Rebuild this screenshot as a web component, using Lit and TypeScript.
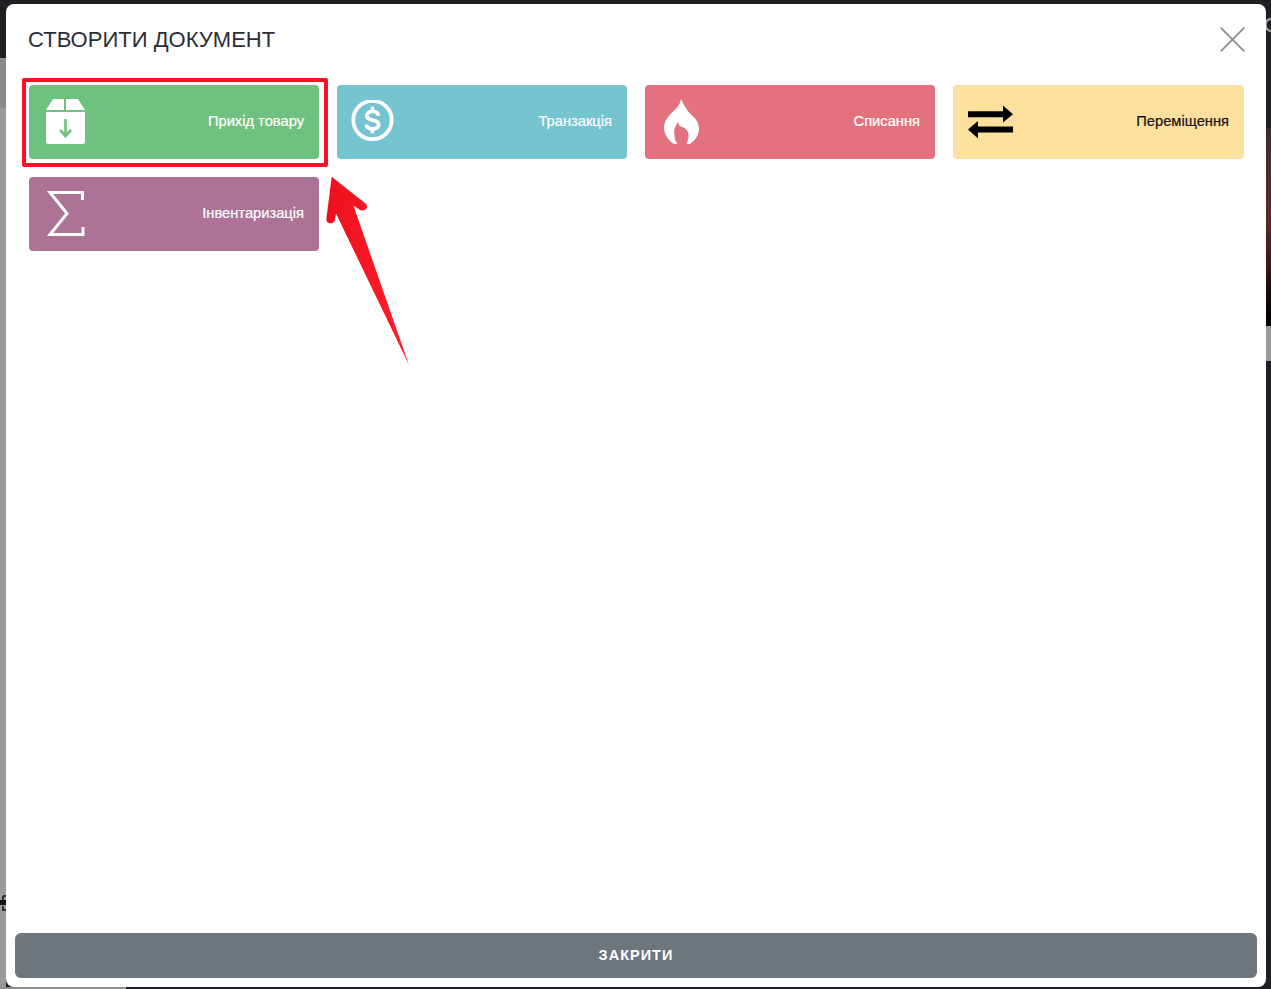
import { LitElement, html, css } from "lit";
import { customElement } from "lit/decorators.js";

@customElement("app-root")
export class AppRoot extends LitElement {
  static styles = css`
    :host {
      display: block;
      position: relative;
      width: 1271px;
      height: 989px;
      overflow: hidden;
      font-family: "Liberation Sans", Arial, sans-serif;
      background: #1e1f23;
    }
    .left-strip {
      position: absolute;
      left: 0;
      top: 58px;
      width: 6px;
      height: 931px;
      background: linear-gradient(#8a8a8a 0, #8a8a8a 50px, #9a9a9a 50px, #9a9a9a 100%);
    }
    .bottom-strip {
      position: absolute;
      left: 0;
      top: 987px;
      width: 126px;
      height: 2px;
      background: #8f8f8f;
    }
    .photo {
      position: absolute;
      left: 1266px;
      top: 128px;
      width: 5px;
      height: 198px;
      background: linear-gradient(#3a2a2c 0, #4b2c2e 35px, #5a2a2c 90px, #3a1416 140px, #0d0505 175px, #000 198px);
    }
    .gray-chip {
      position: absolute;
      left: 1266px;
      top: 326px;
      width: 5px;
      height: 35px;
      background: #9a9a9a;
    }
    .c-glyph {
      position: absolute;
      left: 1266px;
      top: 17px;
    }
    .plug {
      position: absolute;
      left: 0;
      top: 895px;
    }
    .modal {
      position: absolute;
      left: 6px;
      top: 4px;
      width: 1260px;
      height: 983px;
      background: #fff;
      border-radius: 8px;
      display: flex;
      flex-direction: column;
      box-sizing: border-box;
    }
    .head {
      display: flex;
      align-items: center;
      justify-content: space-between;
      height: 71px;
      padding: 0 21px 0 22px;
      box-sizing: border-box;
    }
    .title {
      margin: 0;
      font-size: 22px;
      font-weight: 400;
      color: #2b2e33;
      line-height: 70px;
      letter-spacing: 0.02px;
    }
    .close {
      display: block;
      width: 25px;
      height: 25px;
    }
    .grid {
      display: grid;
      grid-template-columns: 290px 290px 290px 291px;
      grid-auto-rows: 74px;
      gap: 18px;
      padding: 10px 22px 0 23px;
      flex: 1;
      align-content: start;
    }
    .tile {
      border-radius: 4px;
      display: flex;
      align-items: center;
      justify-content: space-between;
      padding: 0 15px 0 14px;
      color: #fff;
      font-size: 14.7px;
      box-sizing: border-box;
    }
    .tile svg {
      display: block;
      flex: none;
    }
    .label {
      padding-bottom: 2px;
      -webkit-text-stroke: 0.2px currentColor;
    }
    .green { background: #6fc17f; }
    .blue { background: #76c4d1; }
    .red { background: #e4727e; }
    .yellow { background: #fee09e; color: #111; }
    .purple { background: #ad7396; }
    .foot {
      padding: 0 9px 9px;
    }
    .closebtn {
      display: block;
      width: 100%;
      height: 45px;
      padding: 0 0 2px;
      border: 0;
      border-radius: 6px;
      background: #6d757d;
      color: #fff;
      font-family: inherit;
      font-size: 14.5px;
      font-weight: 700;
      letter-spacing: 1px;
    }
    .highlight {
      position: absolute;
      left: 22px;
      top: 78px;
      width: 306px;
      height: 89px;
      box-sizing: border-box;
      border: 4px solid #ff0f24;
      border-radius: 2px;
    }
    .arrow {
      position: absolute;
      left: 320px;
      top: 170px;
    }
  `;

  render() {
    return html`
      <div class="left-strip"></div>
      <div class="bottom-strip"></div>
      <div class="photo"></div>
      <div class="gray-chip"></div>
      <svg class="c-glyph" width="5" height="16" viewBox="0 0 5 16">
        <path d="M5 2 A5.5 6 0 0 0 5 14" fill="none" stroke="#9a9a9a" stroke-width="2.5" />
      </svg>
      <svg class="plug" width="6" height="16" viewBox="0 0 6 16">
        <path d="M3 1h3M3 1v4M3 11v4h3" fill="none" stroke="#111" stroke-width="1.5" />
        <rect x="0" y="5" width="6" height="5" fill="#111" />
      </svg>

      <div class="modal">
        <div class="head">
          <h1 class="title">СТВОРИТИ ДОКУМЕНТ</h1>
          <svg class="close" viewBox="0 0 25 25">
            <path d="M0.7 0.7 L24.3 24.3 M24.3 0.7 L0.7 24.3" stroke="#8a8a8a" stroke-width="1.7" fill="none" />
          </svg>
        </div>
        <div class="grid">
          <div class="tile green">
            <svg width="43" height="47" viewBox="0 1 43 47">
              <path d="M3 12 L10 1 H21 V12 Z M23 1 H35 L42 12 H23 Z" fill="#fff" />
              <path d="M3 14 H42 V43.5 A2.5 2.5 0 0 1 39.5 46 H5.5 A2.5 2.5 0 0 1 3 43.5 Z" fill="#fff" />
              <path d="M22.5 21 V38 M17 32 L22.5 38 L28 32" fill="none" stroke="#6fc17f" stroke-width="2.6" />
            </svg>
            <span class="label">Прихід товару</span>
          </div>
          <div class="tile blue">
            <svg width="43" height="44" viewBox="0 2 43 44">
              <circle cx="21.5" cy="22" r="19.2" fill="none" stroke="#fff" stroke-width="3.8" />
              <path d="M27.5 17.8 C27 14.5 24.5 13.4 21.5 13.4 C18 13.4 15.8 15.2 15.8 17.8 C15.8 20.8 18.5 21.4 21.5 22.2 C24.8 23 27.7 24 27.7 26.8 C27.7 29.4 25 30.8 21.5 30.8 C18.5 30.8 15.8 29.8 15.3 26.6" fill="none" stroke="#fff" stroke-width="3.8" />
              <path d="M21.5 8.7 V14 M21.5 30 V35.3" stroke="#fff" stroke-width="3.4" />
            </svg>
            <span class="label">Транзакція</span>
          </div>
          <div class="tile red">
            <svg width="43" height="47" viewBox="0 1 43 47">
              <path d="M21.7 1 C21.5 7 16.5 11 11.5 16 C7 20.5 5 25 5 29.5 C5 36 9 42 15 46 H18.5 C16.5 43 15.5 41 15.5 38 C15.5 34 14.5 31 16.5 29 C17 26 19 24.5 19.5 24 C19.5 27 20 28 23 29 C27 30.5 29.5 33 29.5 37 C29.5 41 28.5 43.5 27.5 46 H31 C36 42.5 40 37.5 40 30.5 C40 20 30 17 27 10 C24.5 7 23.5 3 21.7 1 Z" fill="#fff" />
            </svg>
            <span class="label">Списання</span>
          </div>
          <div class="tile yellow">
            <svg width="47" height="36" viewBox="0 -1 47 36">
              <path d="M1 6.2 H36 V0.5 L46 9.2 L36 17.5 V12.2 H1 Z" fill="#000" />
              <path d="M46 21.5 H11 V16 L1 24.5 L11 33.5 V27.5 H46 Z" fill="#000" />
            </svg>
            <span class="label">Переміщення</span>
          </div>
          <div class="tile purple">
            <svg width="43" height="50" viewBox="0 0 43 50">
              <path d="M39.5 11 V3.5 H7 L24 24.5 L7 45.5 H40 V38" fill="none" stroke="#fff" stroke-width="3" />
            </svg>
            <span class="label">Інвентаризація</span>
          </div>
        </div>
        <div class="foot">
          <button class="closebtn">ЗАКРИТИ</button>
        </div>
      </div>

      <div class="highlight"></div>
      <svg class="arrow" width="95" height="200" viewBox="320 170 95 200">
        <defs>
          <linearGradient id="ag" x1="0" y1="0" x2="1" y2="0">
            <stop offset="0" stop-color="#ee0f1e" />
            <stop offset="1" stop-color="#ff1f2c" />
          </linearGradient>
        </defs>
        <path d="M331.7 176.7 L366.2 204 Q368 207 366 209 Q363 211.5 360 210 L353.5 205.8 L409 365 L336 213.5 L334.8 220.5 Q333.5 223.5 330.5 223.3 Q326.5 223 326.3 219.5 Z" fill="url(#ag)" />
      </svg>
    `;
  }
}
